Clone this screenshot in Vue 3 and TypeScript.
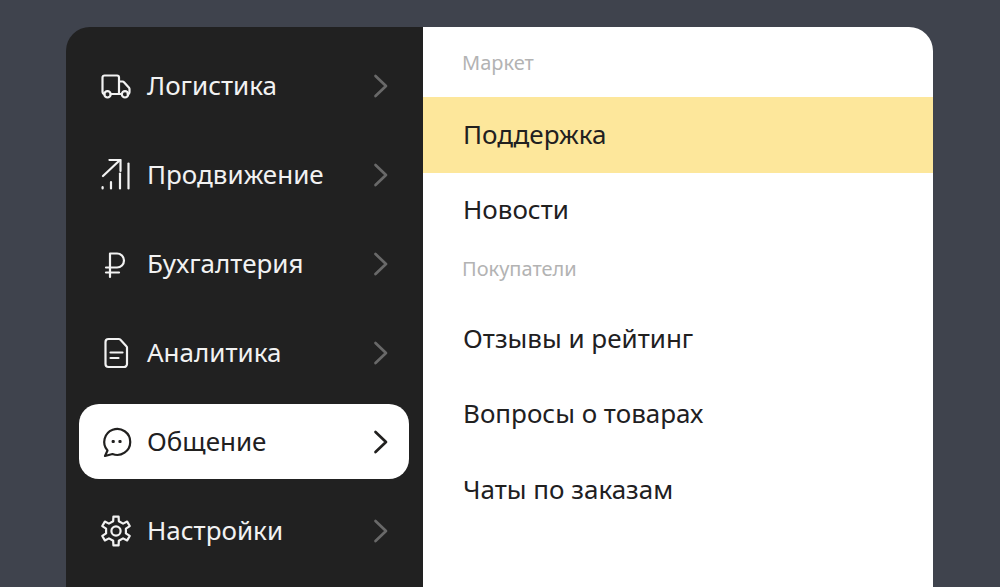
<script setup lang="ts">
interface NavItem {
  label: string
  paths: string[]
  active?: boolean
}

function gearPath(cx: number, cy: number, teeth: number, outer: number, inner: number): string {
  const step = (Math.PI * 2) / teeth
  const pts: string[] = []
  for (let i = 0; i < teeth; i++) {
    const a = -Math.PI / 2 + i * step
    const p = (r: number, d: number) =>
      `${(cx + r * Math.cos(a + d)).toFixed(2)} ${(cy + r * Math.sin(a + d)).toFixed(2)}`
    pts.push(`${i === 0 ? 'M' : 'L'}${p(inner, -step * 0.27)}`)
    pts.push(`L${p(outer, -step * 0.17)}`)
    pts.push(`L${p(outer, step * 0.17)}`)
    pts.push(`L${p(inner, step * 0.27)}`)
  }
  return pts.join(' ') + ' Z'
}

const navItems: NavItem[] = [
  {
    label: 'Логистика',
    paths: [
      'M4.5 24A2.5 2.5 0 0 1 2.5 21.5V7.5a2 2 0 0 1 2-2H17a2 2 0 0 1 2 2V24',
      'M19 11.5h3.5a2 2 0 0 1 1.5.7l5 5.6a2 2 0 0 1 .5 1.3V22a2 2 0 0 1-2 2',
      'M10.5 24h11',
      'M7.5 27.5a3.2 3.2 0 1 0 0-6.4 3.2 3.2 0 0 0 0 6.4Z',
      'M25 27.5a3.2 3.2 0 1 0 0-6.4 3.2 3.2 0 0 0 0 6.4Z',
    ],
  },
  {
    label: 'Продвижение',
    paths: [
      'M3 17 20 1',
      'M9.5 1H20.5V12',
      'M2.6 28.2v1.2',
      'M11 23v6.4',
      'M20 14.5v15',
      'M28.5 4.5v25',
    ],
  },
  {
    label: 'Бухгалтерия',
    paths: ['M10 29V5.5h7a6.9 6.9 0 0 1 0 14H6', 'M6 24.5h13'],
  },
  {
    label: 'Аналитика',
    paths: [
      'M8.5 2h10.2a2 2 0 0 1 1.5.6l6.2 6.6a2 2 0 0 1 .6 1.4V27a3 3 0 0 1-3 3H8.5a3 3 0 0 1-3-3V5a3 3 0 0 1 3-3Z',
      'M10.5 15.5h12',
      'M10.5 21h8',
    ],
  },
  {
    label: 'Общение',
    active: true,
    paths: [
      'M5 30 7.5 24.5A13 13 0 1 1 12.5 28Z',
      'M12.7 15.2h1v.7h-1Z',
      'M19.5 15.2h1v.7h-1Z',
    ],
  },
  {
    label: 'Настройки',
    paths: [gearPath(16, 16, 6, 14.6, 10.2), 'M16 20.6a4.6 4.6 0 1 0 0-9.2 4.6 4.6 0 0 0 0 9.2Z'],
  },
]

interface SubEntry {
  kind: 'label' | 'row'
  text: string
  highlighted?: boolean
  first?: boolean
}

const subEntries: SubEntry[] = [
  { kind: 'label', text: 'Маркет', first: true },
  { kind: 'row', text: 'Поддержка', highlighted: true },
  { kind: 'row', text: 'Новости' },
  { kind: 'label', text: 'Покупатели' },
  { kind: 'row', text: 'Отзывы и рейтинг' },
  { kind: 'row', text: 'Вопросы о товарах' },
  { kind: 'row', text: 'Чаты по заказам' },
]
</script>

<template>
  <main class="page">
    <div class="card">
      <nav class="sidebar">
        <div
          v-for="item in navItems"
          :key="item.label"
          class="nav-item"
          :class="{ active: item.active }"
        >
          <svg class="nav-icon" width="32" height="32" viewBox="0 0 32 32" fill="none" aria-hidden="true">
            <path v-for="d in item.paths" :key="d" :d="d" />
          </svg>
          <span class="nav-label">{{ item.label }}</span>
          <svg class="chevron" width="16" height="24" viewBox="0 0 16 24" fill="none" aria-hidden="true">
            <path d="M2.5 2 13 12 2.5 22" />
          </svg>
        </div>
      </nav>
      <section class="panel">
        <template v-for="entry in subEntries" :key="entry.text">
          <div v-if="entry.kind === 'label'" class="group-label" :class="{ first: entry.first }">
            {{ entry.text }}
          </div>
          <div v-else class="row" :class="{ highlighted: entry.highlighted }">{{ entry.text }}</div>
        </template>
      </section>
    </div>
  </main>
</template>

<style>
html,
body {
  margin: 0;
  background: #3f434d;
}
</style>

<style scoped>
.page {
  height: 587px;
  overflow: hidden;
  box-sizing: border-box;
  padding: 27px 67px 0 66px;
  background: #3f434d;
  font-family: "Noto Sans", "Liberation Sans", sans-serif;
}
.card {
  display: flex;
  height: 600px;
  border-radius: 24px 24px 0 0;
  overflow: hidden;
}
.sidebar {
  width: 357px;
  flex: none;
  box-sizing: border-box;
  padding: 21px 14px 0 13px;
  background: #212121;
  display: flex;
  flex-direction: column;
  gap: 14px;
}
.nav-item {
  height: 75px;
  flex: none;
  display: flex;
  align-items: center;
  box-sizing: border-box;
  padding: 0 20px 0 21px;
  border-radius: 20px;
  color: #f2f2f2;
}
.nav-item.active {
  background: #ffffff;
  color: #21201f;
}
.nav-icon {
  flex: none;
  margin-right: 15px;
  stroke: currentColor;
  stroke-width: 2.2;
  stroke-linecap: round;
  stroke-linejoin: round;
}
.nav-label {
  font-size: 26px;
  padding-bottom: 2px;
}
.chevron {
  flex: none;
  margin-left: auto;
  stroke: #696969;
  stroke-width: 2.7;
  stroke-linecap: round;
  stroke-linejoin: round;
}
.active .chevron {
  stroke: #21201f;
}
.panel {
  flex: 1;
  background: #ffffff;
  display: flex;
  flex-direction: column;
}
.row {
  height: 75.5px;
  flex: none;
  display: flex;
  align-items: center;
  box-sizing: border-box;
  padding: 0 0 2px 40px;
  font-size: 26px;
  color: #21201f;
}
.row.highlighted {
  background: #fde79b;
}
.group-label {
  height: 53px;
  flex: none;
  box-sizing: border-box;
  padding: 0 0 13px 39px;
  display: flex;
  align-items: center;
  font-size: 20px;
  color: #b3b3b3;
}
.group-label.first {
  height: 70px;
  padding: 0 0 0 39px;
}
</style>
